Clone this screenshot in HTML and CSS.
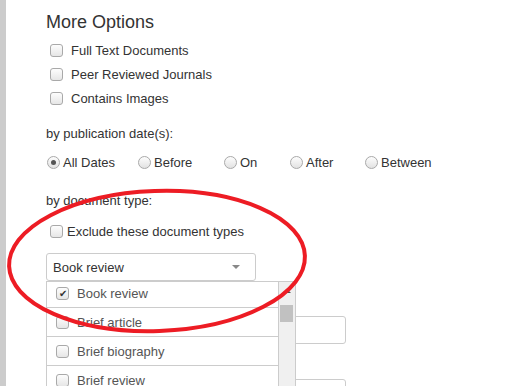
FILE: index.html
```html
<!DOCTYPE html>
<html lang="en">
<head>
  <meta charset="UTF-8">
  <title>More Options</title>
  <link rel="stylesheet" href="styles.css">
</head>
<body>
  <div class="page">
    <div class="side-bar"></div>
    <div class="options">
      <h2>More Options</h2>
      <label class="check-row"><span class="box"></span>Full Text Documents</label>
      <label class="check-row"><span class="box"></span>Peer Reviewed Journals</label>
      <label class="check-row"><span class="box"></span>Contains Images</label>

      <div class="group-label">by publication date(s):</div>
      <div class="radio-row">
        <label class="radio w-all"><span class="dot checked"></span>All Dates</label>
        <label class="radio w-before"><span class="dot"></span>Before</label>
        <label class="radio w-on"><span class="dot"></span>On</label>
        <label class="radio w-after"><span class="dot"></span>After</label>
        <label class="radio"><span class="dot"></span>Between</label>
      </div>

      <div class="group-label doc">by document type:</div>
      <label class="check-row exclude"><span class="box"></span>Exclude these document types</label>

      <div class="select-wrap">
        <div class="select">
          <span>Book review</span>
          <span class="caret"></span>
        </div>

        <div class="field"></div>
        <div class="field second"></div>

        <div class="dropdown">
          <div class="items">
            <div class="item"><span class="box ticked">&#10004;</span>Book review</div>
            <div class="item"><span class="box"></span>Brief article</div>
            <div class="item"><span class="box"></span>Brief biography</div>
            <div class="item"><span class="box"></span>Brief review</div>
          </div>
          <div class="scrollbar">
            <span class="arrow"></span>
            <span class="thumb"></span>
          </div>
        </div>
      </div>
    </div>
  </div>

  <!-- red marker circle drawn over the screenshot -->
  <svg class="marker" width="505" height="386" viewBox="0 0 505 386">
    <ellipse cx="157" cy="261" rx="148" ry="70" fill="none" stroke="#ed1c24" stroke-width="4" transform="rotate(-2 157 261)"/>
  </svg>
</body>
</html>
```

FILE: styles.css
```css
body, html {
  margin: 0;
  padding: 0;
  width: 100%;
  height: 100%;
  background: #fff;
  overflow: hidden;
}
.page {
  display: flex;
  height: 100%;
  font-family: "Liberation Sans", Arial, sans-serif;
  font-size: 13px;
  color: #333;
}
.side-bar {
  width: 6px;
  background: #cccccc;
  flex-shrink: 0;
}
.options {
  padding: 11px 0 0 40px;
  flex: 1;
}
h2 {
  font-size: 18px;
  font-weight: normal;
  line-height: 22px;
  margin: 0 0 5px 0;
  color: #333;
}
.check-row {
  display: flex;
  align-items: center;
  height: 24px;
  padding-left: 4px;
}
.box {
  display: inline-block;
  box-sizing: border-box;
  width: 13px;
  height: 13px;
  border: 1px solid #a9a9a9;
  border-radius: 3px;
  background: linear-gradient(#fdfdfd, #e6e6e6);
  margin-right: 8px;
}
.box.ticked {
  font-size: 10px;
  line-height: 11px;
  text-align: center;
  color: #333;
}
.group-label {
  margin-top: 14px;
  line-height: 20px;
}
.radio-row {
  display: flex;
  align-items: center;
  height: 20px;
  margin-top: 8px;
}
.radio {
  display: flex;
  align-items: center;
}
.w-all { width: 91px; }
.w-before { width: 86px; }
.w-on { width: 66px; }
.w-after { width: 75px; }
.dot {
  box-sizing: border-box;
  width: 13px;
  height: 13px;
  border: 1px solid #a9a9a9;
  border-radius: 50%;
  background: linear-gradient(#fdfdfd, #e2e2e2);
  margin: 0 3px 0 1px;
  position: relative;
}
.dot.checked::after {
  content: "";
  position: absolute;
  left: 3px;
  top: 3px;
  width: 5px;
  height: 5px;
  border-radius: 50%;
  background: #555;
}
.group-label.doc {
  margin-top: 19px;
}
.exclude {
  margin-top: 8px;
}
.exclude .box {
  margin-right: 4px;
}
.select-wrap {
  position: relative;
  margin-top: 10px;
}
.select {
  box-sizing: border-box;
  width: 210px;
  height: 28px;
  border: 1px solid #ccc;
  border-radius: 3px;
  display: flex;
  align-items: center;
  justify-content: space-between;
  padding: 0 15px 0 6px;
  font-size: 13px;
  color: #333;
}
.caret {
  width: 0;
  height: 0;
  border-left: 4px solid transparent;
  border-right: 4px solid transparent;
  border-top: 4px solid #888;
}
.field {
  box-sizing: border-box;
  width: 300px;
  height: 28px;
  border: 1px solid #ccc;
  border-radius: 3px;
  margin-top: 35px;
}
.field.second {
  margin-top: 35px;
}
.dropdown {
  position: absolute;
  left: 0;
  top: 28px;
  width: 250px;
  height: 120px;
  display: flex;
  background: #fff;
  border-left: 1px solid #ccc;
  border-top: 1px solid #ccc;
  box-sizing: border-box;
  overflow: hidden;
}
.items {
  flex: 1;
  margin-top: -3px;
}
.item {
  box-sizing: border-box;
  height: 29px;
  border-bottom: 1px solid #ccc;
  display: flex;
  align-items: center;
  padding-left: 9px;
  font-size: 13px;
  color: #555;
}
.scrollbar {
  width: 16px;
  background: #f0f0f0;
  border-left: 1px solid #ccc;
  border-right: 1px solid #ccc;
  position: relative;
}
.arrow {
  position: absolute;
  left: 4px;
  top: 7px;
  border-left: 4px solid transparent;
  border-right: 4px solid transparent;
  border-bottom: 4px solid #505050;
}
.thumb {
  position: absolute;
  left: 1px;
  top: 23px;
  width: 13px;
  height: 17px;
  background: #c1c1c1;
}
.marker {
  position: absolute;
  left: 0;
  top: 0;
  pointer-events: none;
}
```
